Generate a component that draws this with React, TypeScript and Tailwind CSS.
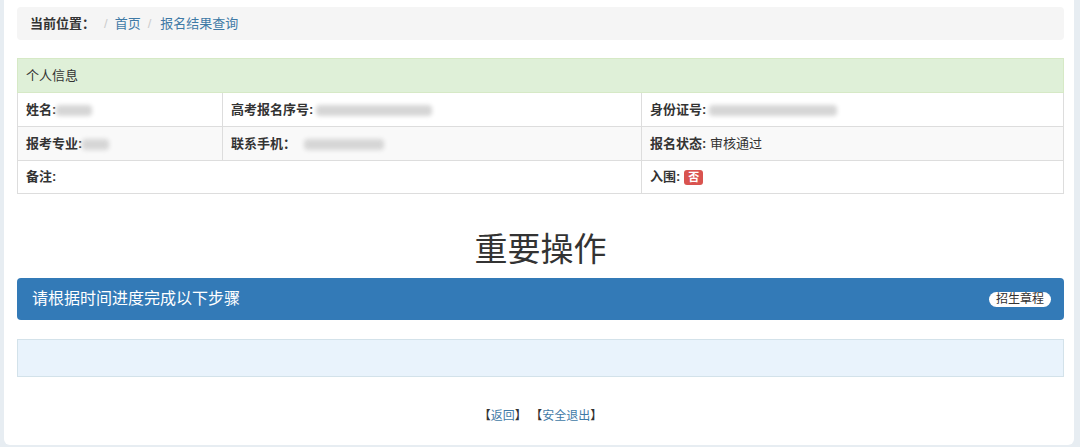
import React from 'react'

const font = { fontFamily: '"Liberation Sans", "Noto Sans CJK SC", sans-serif' }

function Blur({ w }: { w: number }) {
  // masked personal data in the screenshot
  return (
    <span className="inline-flex items-center align-middle h-[14px]">
      <span className="block h-[11px] bg-[#d6d6d6] blur-[2px] rounded-sm" style={{ width: w }} />
    </span>
  )
}

function Breadcrumb() {
  return (
    <div className="h-[33px] bg-[#f5f5f5] rounded-[4px] flex items-center pl-[13px] text-[13px]">
      <span className="font-bold text-[#333]">当前位置：</span>
      <span className="ml-[9px] text-[#ccc]">/</span>
      <a className="ml-[7px] text-[#3f7aa6]">首页</a>
      <span className="ml-[7px] text-[#ccc]">/</span>
      <a className="ml-[9px] text-[#3f7aa6]">报名结果查询</a>
    </div>
  )
}

function InfoTable() {
  const cell = 'border border-[#ddd] px-[8px] h-[34px] align-middle'
  return (
    <table className="mt-[18px] w-full border-collapse text-[13px] text-[#333]">
      <colgroup>
        <col className="w-[205px]" />
        <col className="w-[419px]" />
        <col />
      </colgroup>
      <tbody>
        <tr className="bg-[#dff0d8]">
          <td colSpan={3} className="border border-[#d6e9c6] px-[8px] h-[34px] align-middle">
            个人信息
          </td>
        </tr>
        <tr>
          <td className={cell}>
            <b>姓名:</b>
            <Blur w={36} />
          </td>
          <td className={cell}>
            <b>高考报名序号:</b>
            <span className="ml-[3px]"><Blur w={116} /></span>
          </td>
          <td className={cell}>
            <b>身份证号:</b>
            <span className="ml-[3px]"><Blur w={128} /></span>
          </td>
        </tr>
        <tr className="bg-[#f9f9f9]">
          <td className={cell}>
            <b>报考专业:</b>
            <Blur w={27} />
          </td>
          <td className={cell}>
            <b>联系手机：</b>
            <span className="ml-[8px]"><Blur w={80} /></span>
          </td>
          <td className={cell}>
            <b>报名状态:</b> 审核通过
          </td>
        </tr>
        <tr>
          <td colSpan={2} className="border border-[#ddd] px-[8px] h-[33px] align-middle">
            <b>备注:</b>
          </td>
          <td className="border border-[#ddd] px-[8px] h-[33px] align-middle">
            <b>入围:</b>
            <span className="ml-[4px] inline-block align-middle bg-[#d9534f] text-white text-[11px] leading-[15px] px-[4px] rounded-[3px] font-bold">
              否
            </span>
          </td>
        </tr>
      </tbody>
    </table>
  )
}

export default function App() {
  return (
    <div className="w-[1080px] h-[447px] bg-[#e7edf2] pl-[4px] pr-[6px]" style={font}>
      <div className="h-[445px] bg-white rounded-b-[6px] pl-[13px] pr-[10px] pt-[7px]">
        <Breadcrumb />
        <InfoTable />

        <h2 className="mt-[38px] h-[36px] leading-[36px] text-center text-[33px] text-[#333] font-normal">
          重要操作
        </h2>

        <div className="mt-[10px] h-[42px] bg-[#337ab7] rounded-[4px] flex items-center justify-between pl-[15px] pr-[13px]">
          <span className="text-white text-[16px]">请根据时间进度完成以下步骤</span>
          <span className="bg-white text-[#333] text-[12px] leading-[15px] px-[7px] rounded-full">招生章程</span>
        </div>

        <div className="mt-[19px] h-[38px] bg-[#e9f3fc] border border-[#d3e2ea]" />

        <div className="mt-[30px] text-center text-[12px] text-[#333]">
          【<a className="text-[#3f7aa6]">返回</a>】 【<a className="text-[#3f7aa6]">安全退出</a>】
        </div>
      </div>
    </div>
  )
}
